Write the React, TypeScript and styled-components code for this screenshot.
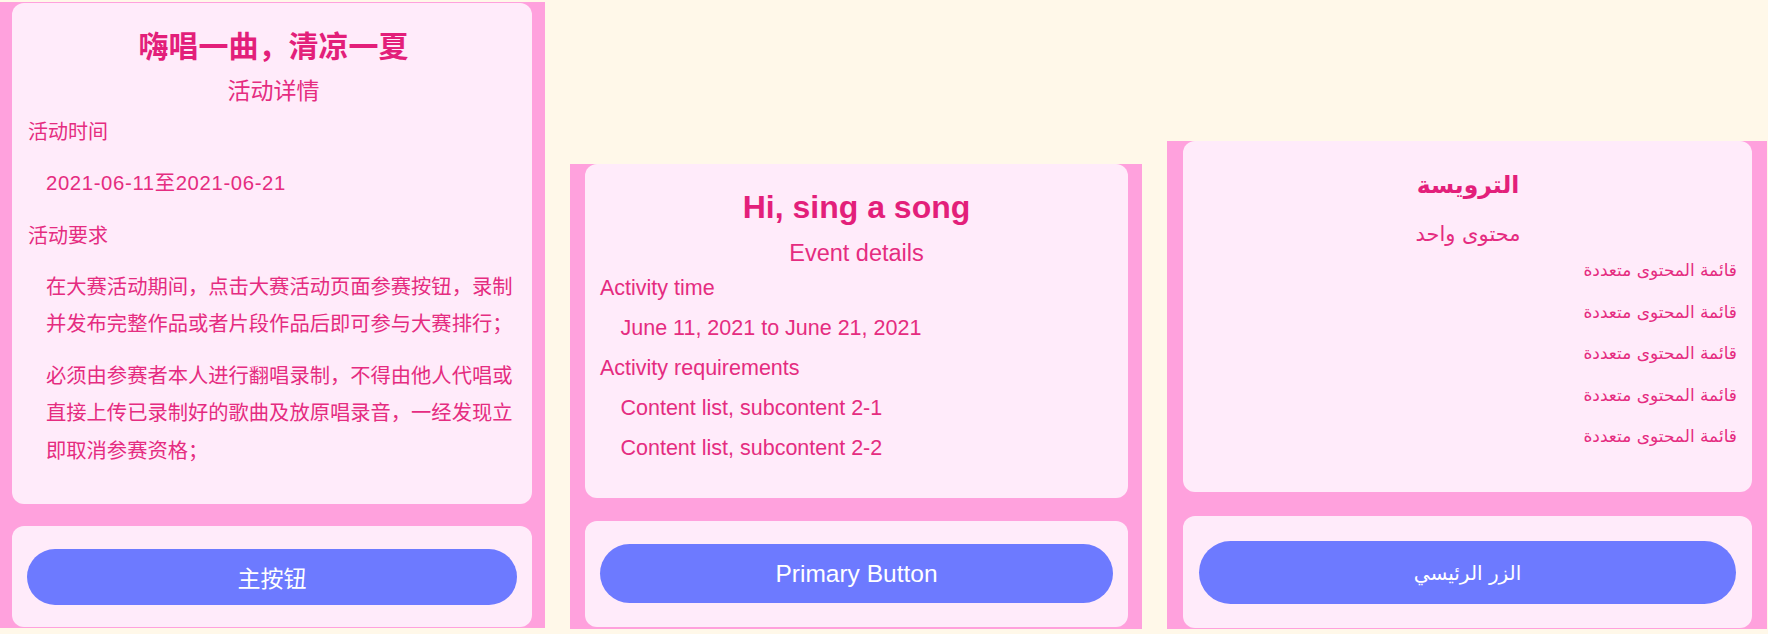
import React from "react";
import styled, { createGlobalStyle } from "styled-components";

const GlobalStyle = createGlobalStyle`
  html, body {
    margin: 0;
    padding: 0;
    background: #fff8e9;
  }
  body {
    width: 1768px;
    height: 634px;
    overflow: hidden;
  }
`;

const Stage = styled.main`
  display: flex;
  align-items: flex-end;
  gap: 25px;
  height: 634px;
  box-sizing: border-box;
  padding-bottom: 5px;
`;

const Panel = styled.section<{
  $w: number;
  $pl: number;
  $pr: number;
  $pt: number;
  $pb: number;
  $gap: number;
  $mb?: number;
  $font: string;
}>`
  flex: none;
  width: ${(p) => p.$w}px;
  box-sizing: border-box;
  padding: ${(p) => `${p.$pt}px ${p.$pr}px ${p.$pb}px ${p.$pl}px`};
  margin-bottom: ${(p) => p.$mb ?? 0}px;
  background: #ffa1dd;
  display: flex;
  flex-direction: column;
  gap: ${(p) => p.$gap}px;
  font-family: ${(p) => p.$font};
`;

const Card = styled.div<{ $pt: number; $pb: number; $pl: number; $pr: number }>`
  background: #ffebfa;
  border-radius: 12px;
  padding: ${(p) => `${p.$pt}px ${p.$pr}px ${p.$pb}px ${p.$pl}px`};
  display: flex;
  flex-direction: column;
`;

const Title = styled.h1<{ $fs: number; $lh: number; $mb?: number }>`
  margin: 0 0 ${(p) => p.$mb ?? 0}px;
  font-size: ${(p) => p.$fs}px;
  line-height: ${(p) => p.$lh}px;
  font-weight: 700;
  color: #e31f7a;
  text-align: center;
`;

const Subtitle = styled.h2<{ $fs: number; $lh: number }>`
  margin: 0;
  font-size: ${(p) => p.$fs}px;
  line-height: ${(p) => p.$lh}px;
  font-weight: 400;
  color: #e52c80;
  text-align: center;
`;

const Label = styled.div<{ $fs: number; $lh: number }>`
  font-size: ${(p) => p.$fs}px;
  line-height: ${(p) => p.$lh}px;
  color: #e52c80;
`;

const List = styled.ul<{ $indent: number; $py: number; $gap: number }>`
  list-style: none;
  margin: 0;
  padding: ${(p) => `${p.$py}px 0 ${p.$py}px ${p.$indent}px`};
  display: flex;
  flex-direction: column;
  gap: ${(p) => p.$gap}px;
`;

const Item = styled.li<{ $fs: number; $lh: number; $ls?: number }>`
  font-size: ${(p) => p.$fs}px;
  line-height: ${(p) => p.$lh}px;
  letter-spacing: ${(p) => p.$ls ?? 0}px;
  color: #e52c80;
`;

const PrimaryButton = styled.button<{ $h: number; $fs: number; $font: string }>`
  display: block;
  width: 100%;
  height: ${(p) => p.$h}px;
  border: none;
  border-radius: ${(p) => p.$h / 2}px;
  background: #6d7aff;
  color: #ffffff;
  font-family: ${(p) => p.$font};
  font-size: ${(p) => p.$fs}px;
  padding: 0;
  cursor: pointer;
`;

const CN_FONT = `"Liberation Sans", "Noto Sans CJK SC", sans-serif`;
const EN_FONT = `"Liberation Sans", Arial, sans-serif`;
const AR_FONT = `"DejaVu Sans", "Liberation Sans", sans-serif`;

const arabicItems = Array.from({ length: 5 }, () => "قائمة المحتوى متعددة");

export default function App() {
  return (
    <>
      <GlobalStyle />
      <Stage>
        <Panel $w={545} $pl={12} $pr={13} $pt={1} $pb={1} $mb={1} $gap={22} $font={CN_FONT}>
          <Card $pt={22} $pb={20} $pl={16} $pr={13}>
            <Title $fs={30} $lh={44}>嗨唱一曲，清凉一夏</Title>
            <Subtitle $fs={23} $lh={44}>活动详情</Subtitle>
            <Label $fs={20} $lh={38}>活动时间</Label>
            <List $indent={18} $py={14} $gap={14}>
              <Item $fs={20.3} $lh={37.5} $ls={0.65}>2021-06-11至2021-06-21</Item>
            </List>
            <Label $fs={20} $lh={38}>活动要求</Label>
            <List $indent={18} $py={14} $gap={14}>
              <Item $fs={20.3} $lh={37.5}>
                在大赛活动期间，点击大赛活动页面参赛按钮，录制并发布完整作品或者片段作品后即可参与大赛排行；
              </Item>
              <Item $fs={20.3} $lh={37.5}>
                必须由参赛者本人进行翻唱录制，不得由他人代唱或直接上传已录制好的歌曲及放原唱录音，一经发现立即取消参赛资格；
              </Item>
            </List>
          </Card>
          <Card $pt={23} $pb={22} $pl={15} $pr={15}>
            <PrimaryButton $h={56} $fs={23} $font={CN_FONT}>主按钮</PrimaryButton>
          </Card>
        </Panel>

        <Panel $w={572} $pl={15} $pr={14} $pt={0} $pb={2} $gap={23} $font={EN_FONT}>
          <Card $pt={20} $pb={30} $pl={15} $pr={15}>
            <Title $fs={32} $lh={46} $mb={8}>Hi, sing a song</Title>
            <Subtitle $fs={23.5} $lh={30}>Event details</Subtitle>
            <Label $fs={21.5} $lh={40}>Activity time</Label>
            <List $indent={20.5} $py={0} $gap={0}>
              <Item $fs={21.5} $lh={40}>June 11, 2021 to June 21, 2021</Item>
            </List>
            <Label $fs={21.5} $lh={40}>Activity requirements</Label>
            <List $indent={20.5} $py={0} $gap={0}>
              <Item $fs={21.5} $lh={40}>Content list, subcontent 2-1</Item>
              <Item $fs={21.5} $lh={40}>Content list, subcontent 2-2</Item>
            </List>
          </Card>
          <Card $pt={23} $pb={24} $pl={15} $pr={15}>
            <PrimaryButton $h={59} $fs={24.5} $font={EN_FONT}>Primary Button</PrimaryButton>
          </Card>
        </Panel>

        <Panel $w={600} $pl={16} $pr={15} $pt={0} $pb={1} $gap={24} $font={AR_FONT}>
          <Card $pt={20} $pb={34} $pl={16} $pr={15} dir="rtl">
            <Title $fs={23.5} $lh={48} $mb={9}>الترويسة</Title>
            <Subtitle $fs={21} $lh={32}>محتوى واحد</Subtitle>
            <List $indent={0} $py={0} $gap={0}>
              {arabicItems.map((t, i) => (
                <Item key={i} $fs={17} $lh={41.6}>{t}</Item>
              ))}
            </List>
          </Card>
          <Card $pt={25} $pb={24} $pl={16} $pr={16} dir="rtl">
            <PrimaryButton $h={63} $fs={20} $font={AR_FONT}>الزر الرئيسي</PrimaryButton>
          </Card>
        </Panel>
      </Stage>
    </>
  );
}
